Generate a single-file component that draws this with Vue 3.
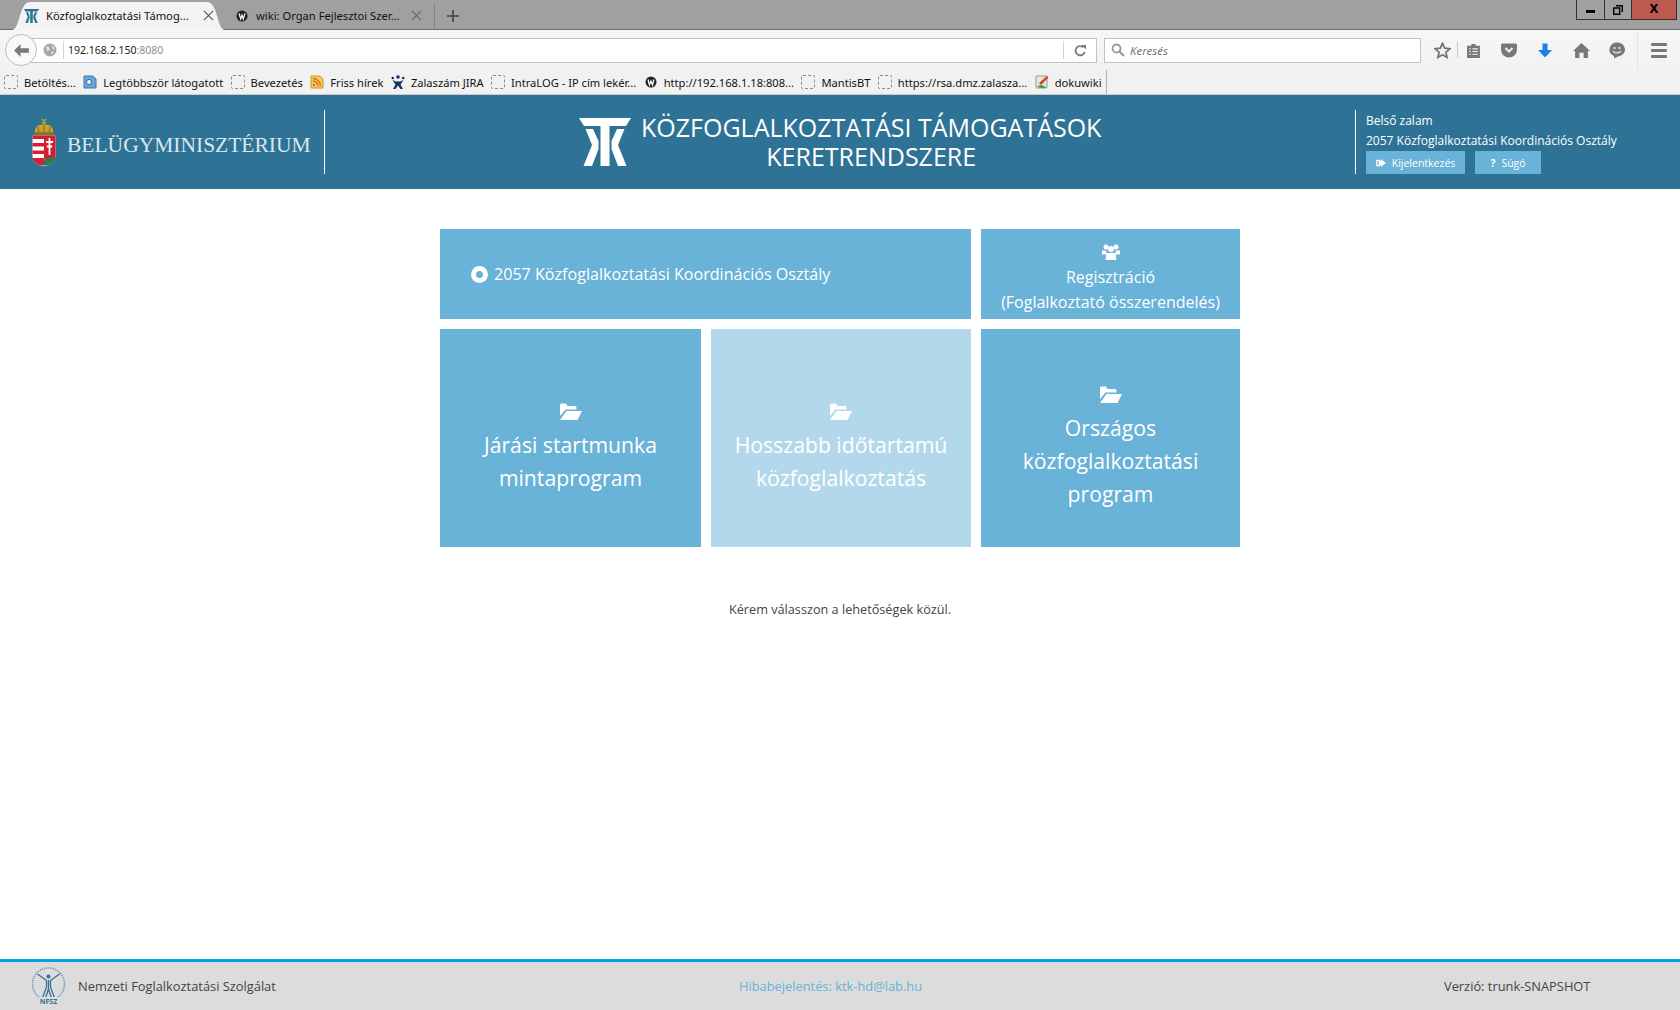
<script setup>
const bookmarks = [
  { label: 'Betöltés...', icon: 'empty' },
  { label: 'Legtöbbször látogatott', icon: 'most' },
  { label: 'Bevezetés', icon: 'empty' },
  { label: 'Friss hírek', icon: 'rss' },
  { label: 'Zalaszám JIRA', icon: 'jira' },
  { label: 'IntraLOG - IP cím lekér...', icon: 'empty' },
  { label: 'http://192.168.1.18:808...', icon: 'wiki' },
  { label: 'MantisBT', icon: 'empty' },
  { label: 'https://rsa.dmz.zalasza...', icon: 'empty' },
  { label: 'dokuwiki', icon: 'doku' }
]
const tiles = [
  { id: 1, lines: ['Járási startmunka', 'mintaprogram'], off: false },
  { id: 2, lines: ['Hosszabb időtartamú', 'közfoglalkoztatás'], off: true },
  { id: 3, lines: ['Országos', 'közfoglalkoztatási', 'program'], off: false }
]
const ktkPath = 'M0 0H52L47 8H5zM21.500 8h9v40h-9zM6.500 11H14L19.500 23V31L13 48H4.500L13 27zM45.500 11H38L32.500 23V31L39 48H47.500L39 27z'
</script>

<template>
  <div class="page">
    <div class="tabstrip">
      <div class="tab tab-active">
        <svg class="tab-bg" viewBox="0 0 213 28" preserveAspectRatio="none"><path d="M0 28C8 28 7 0 18 0H195C206 0 205 28 213 28Z" fill="#f3f3f3"/></svg>
        <svg class="favicon" viewBox="0 0 52 48"><path fill="#2e7396" :d="ktkPath"/></svg>
        <span class="tab-title">Közfoglalkoztatási Támog...</span>
        <svg class="tab-x" viewBox="0 0 12 12"><path d="M1 1l10 10M11 1L1 11" stroke="#555" stroke-width="1.200"/></svg>
      </div>
      <div class="tab tab-other">
        <svg class="favicon small" viewBox="0 0 14 14"><circle cx="7" cy="7" r="6.500" fill="#222"/><path d="M3.500 4l2 6.500L7 6l1.500 4.500 2-6.500" stroke="#fff" stroke-width="1.400" fill="none"/></svg>
        <span class="tab-title">wiki: Organ Fejlesztoi Szer...</span>
        <svg class="tab-x" viewBox="0 0 12 12"><path d="M1 1l10 10M11 1L1 11" stroke="#666" stroke-width="1.200"/></svg>
      </div>
      <span class="tab-sep"></span>
      <svg class="tab-plus" viewBox="0 0 12 12"><path d="M6 0v12M0 6h12" stroke="#444" stroke-width="1.600"/></svg>
      <div class="window-btns">
        <span class="wbtn"><span class="min-bar"></span></span>
        <span class="wbtn restore"><svg viewBox="0 0 10 10" width="10" height="10"><path d="M3 .7h6.300V7M.7 3h6v6.300h-6z" fill="none" stroke="#000" stroke-width="1.400"/></svg></span>
        <span class="wbtn close">x</span>
      </div>
    </div>

    <div class="navbar">
      <div class="back">
        <svg viewBox="0 0 16 14" width="15" height="13"><path d="M7 0L0 7l7 7V9.500h9v-5H7z" fill="#7a7a7a"/></svg>
      </div>
      <div class="urlbar">
        <svg class="globe" viewBox="0 0 14 14"><circle cx="7" cy="7" r="6.500" fill="#a8a8a8"/><path d="M3 3l3 1 1 3-3 1zM9 2l3 3-2 2zM8 9l3-1-2 4z" fill="#e4e4e4"/></svg>
        <span class="url-sep"></span>
        <span class="url">192.168.2.150<span class="port">:8080</span></span>
        <span class="url-sep end"></span>
        <svg class="reload" viewBox="0 0 14 14"><path d="M11.500 8.500A5 5 0 1 1 10 3.500" fill="none" stroke="#7a7a7a" stroke-width="2"/><path d="M8 1h5v5z" fill="#7a7a7a"/></svg>
      </div>
      <div class="searchbar">
        <svg viewBox="0 0 14 14" width="14" height="14"><circle cx="5.500" cy="5.500" r="4" fill="none" stroke="#999" stroke-width="1.800"/><path d="M8.500 8.500l4.500 4.500" stroke="#999" stroke-width="2.200"/></svg>
        <span>Keresés</span>
      </div>
      <div class="tools">
        <svg class="t-star" viewBox="0 0 16 16"><path d="M8 1.200l2 4.600 5 .5-3.800 3.300 1.100 4.900L8 12l-4.300 2.500 1.100-4.900L1 6.300l5-.5z" fill="#f3f3f3" stroke="#6f7274" stroke-width="1.600"/></svg>
        <span class="tool-sep"></span>
        <svg class="t-list" viewBox="0 0 14 14"><path d="M1 2.500h4V1h4v1.500h4V14H1z" fill="#75787a"/><path d="M3 5.500h1.500M6 5.500h5M3 8h1.500M6 8h5M3 10.500h1.500M6 10.500h5" stroke="#f0f0f0"/></svg>
        <svg class="t-pocket" viewBox="0 0 16 14"><path d="M0 1.500A1.500 1.500 0 0 1 1.500 0h13A1.500 1.500 0 0 1 16 1.500V6A8 8 0 0 1 0 6z" fill="#75787a"/><path d="M4.500 4.500L8 8l3.500-3.500" fill="none" stroke="#f0f0f0" stroke-width="2"/></svg>
        <svg class="t-down" viewBox="0 0 14 14"><path d="M4.500 0h5v6.500H14L7 14 0 6.500h4.500z" fill="#1b7fe4"/></svg>
        <svg class="t-home" viewBox="0 0 16 14"><path d="M8 0l8 7.500h-2V14h-4V9H6v5H2V7.500H0z" fill="#75787a"/></svg>
        <svg class="t-chat" viewBox="0 0 16 16"><path d="M8 0a7.500 7 0 0 1 1 14l-4 2v-2.600A7.500 7 0 0 1 8 0z" fill="#75787a"/><circle cx="5.500" cy="5.500" r="1.100" fill="#f0f0f0"/><circle cx="10.500" cy="5.500" r="1.100" fill="#f0f0f0"/><path d="M4 8.500c1.500 2.500 6.500 2.500 8 0" stroke="#f0f0f0" stroke-width="1.300" fill="none"/></svg>
        <span class="tool-sep tall"></span>
        <div class="hamburger"><i></i><i></i><i></i></div>
      </div>
    </div>

    <div class="bookmarks">
      <div v-for="b in bookmarks" :key="b.label" class="bm">
        <span v-if="b.icon === 'empty'" class="bm-empty"></span>
        <svg v-else-if="b.icon === 'most'" class="bm-ico" viewBox="0 0 14 14"><path d="M1 1h9l3 3v9H1z" fill="#6aa5d8" stroke="#3c78b0"/><circle cx="6" cy="7" r="2.500" fill="#fff" stroke="#2a5f90"/></svg>
        <svg v-else-if="b.icon === 'rss'" class="bm-ico" viewBox="0 0 14 14"><path d="M1 1h9l3 3v9H1z" fill="#f4c95e" stroke="#c79a2d"/><path d="M3 6a5 5 0 0 1 5 5M3 3.500A7.500 7.500 0 0 1 10.500 11" fill="none" stroke="#d9751a" stroke-width="1.300"/><circle cx="4" cy="10" r="1.200" fill="#d9751a"/></svg>
        <svg v-else-if="b.icon === 'jira'" class="bm-ico" viewBox="0 0 14 14"><circle cx="7" cy="2" r="1.800" fill="#17325f"/><circle cx="1.800" cy="3" r="1.300" fill="#17325f"/><circle cx="12.200" cy="3" r="1.300" fill="#17325f"/><path d="M1.500 5l3.500 1.500h4L12.500 5l-3 4.500L12 14H9.500L7 10.500 4.500 14H2l2.500-4.500z" fill="#17325f"/></svg>
        <svg v-else-if="b.icon === 'wiki'" class="bm-ico" viewBox="0 0 14 14"><circle cx="7" cy="7" r="5.500" fill="#222"/><path d="M4 4.500l1.500 5.500L7 6l1.500 4L10 4.500" stroke="#fff" stroke-width="1.300" fill="none"/></svg>
        <svg v-else class="bm-ico" viewBox="0 0 14 14"><rect x="1" y="1" width="11" height="12" rx="1" fill="#e8e6d8" stroke="#9a9a88"/><path d="M2 11l5-1 5 3H5z" fill="#3aa34a"/><path d="M4 8l8-7 1.500 1.500L6 10z" fill="#c9452f"/></svg>
        <span class="bm-label">{{ b.label }}</span>
      </div>
      <span class="bm-end"></span>
    </div>

    <header class="topbar">
      <div class="ministry">
        <svg class="arms" viewBox="0 0 24 48">
          <path d="M3 15C2 9 6 6.500 12 6.500S22 9 21 15z" fill="#c9a227"/>
          <path d="M10 1l4 4M14 1l-4 4M12 3v4" stroke="#c9a227" stroke-width="1.300"/>
          <path d="M6 9l1 6M12 7v8M18 9l-1 6" stroke="#7a6a1f"/>
          <rect x="2" y="14" width="20" height="2.500" fill="#8f7a22"/>
          <path d="M.5 17.500h23V38a11.500 10 0 0 1-23 0z" fill="#fff"/>
          <path d="M.5 17.500H12v3.500H.5zM.5 25H12v3.500H.5zM.5 32.500H12V36H.5zM.5 40H12v7.500C6 47.500 1.500 44 .5 40z" fill="#d3202f"/>
          <path d="M12 17.500h11.500V38c0 1.500-.2 2.500-.5 3.500H12z" fill="#d3202f"/>
          <path d="M17.500 20v17M14 24h7M14.800 28.500h5.400" stroke="#fff" stroke-width="1.800"/>
          <path d="M12 47.500V42c3-2.500 8-3.500 11.500-2 -.5 4-5 7.500-11.500 7.500z" fill="#2f7a53"/>
        </svg>
        <span class="ministry-name">BELÜGYMINISZTÉRIUM</span>
      </div>
      <span class="rule"></span>
      <div class="app-title">
        <svg class="ktk" viewBox="0 0 52 48"><path fill="#fff" :d="ktkPath"/></svg>
        <h1>KÖZFOGLALKOZTATÁSI TÁMOGATÁSOK<br>KERETRENDSZERE</h1>
      </div>
      <span class="rule"></span>
      <div class="user">
        <div class="user-line">Belső zalam</div>
        <div class="user-line">2057 Közfoglalkoztatási Koordinációs Osztály</div>
        <div class="user-btns">
          <button class="hbtn logout">
            <svg viewBox="0 0 12 10" width="10" height="8"><path d="M0 1h5v1.500H1.500v5H5V9H0zM6 2.500V0l6 5-6 5V7.500H3v-5z" fill="#fff"/></svg>
            Kijelentkezés
          </button>
          <button class="hbtn help"><b>?</b> Súgó</button>
        </div>
      </div>
    </header>

    <main class="content">
      <div class="grid">
        <div class="tile org">
          <span class="radio"></span>
          <span>2057 Közfoglalkoztatási Koordinációs Osztály</span>
        </div>
        <div class="tile reg">
          <svg class="people" viewBox="0 0 18 16"><circle cx="4" cy="3" r="2.500" fill="#fff"/><circle cx="14" cy="3" r="2.500" fill="#fff"/><circle cx="9" cy="5" r="3" fill="#fff"/><path d="M0 6.500h4l1 4H0zM18 6.500h-4l-1 4h5z" fill="#fff"/><path d="M4.500 9h9l1 7h-11z" fill="#fff"/></svg>
          <div>Regisztráció</div>
          <div>(Foglalkoztató összerendelés)</div>
        </div>
        <div class="tiles-row">
          <div v-for="t in tiles" :key="t.id" class="tile big" :class="{ off: t.off }">
            <svg class="folder" viewBox="0 0 22 17"><path d="M0 2a1.500 1.500 0 0 1 1.500-1.500h4.500L7.500 3H15a1.500 1.500 0 0 1 1.500 1.500V6.500H5.500L0 13z" fill="#fff"/><path d="M6.500 8H22l-4.500 9H0z" fill="#fff"/></svg>
            <div v-for="line in t.lines" :key="line">{{ line }}</div>
          </div>
        </div>
      </div>
      <p class="hint">Kérem válasszon a lehetőségek közül.</p>
    </main>

    <footer class="footer">
      <div class="nfsz">
        <svg class="nfsz-logo" viewBox="2 0 36 38">
          <circle cx="20" cy="17" r="16" fill="none" stroke="#6a9bb0" stroke-width="1.600" stroke-dasharray="1.200 1"/>
          <circle cx="20" cy="9.500" r="2" fill="#2e7396"/>
          <path d="M9 7l9 6.500V20l-4 11M31 7l-9 6.500V20l4 11M20 13v9l-3 9M20 22l3 9" fill="none" stroke="#2e7396" stroke-width="1.300"/>
          <rect x="10" y="30" width="20" height="8" fill="#dcdcdc"/>
          <text x="20" y="36.500" text-anchor="middle" class="nfsz-text">NFSZ</text>
        </svg>
        <span>Nemzeti Foglalkoztatási Szolgálat</span>
      </div>
      <a class="report">Hibabejelentés: ktk-hd@lab.hu</a>
      <span class="version">Verzió: trunk-SNAPSHOT</span>
    </footer>
  </div>
</template>

<style>
html, body { margin: 0; background: #fff; }
</style>

<style scoped>
.page {
  width: 1680px;
  height: 1010px;
  display: flex;
  flex-direction: column;
  font-family: "Open Sans", "Noto Sans", sans-serif;
  overflow: hidden;
}
.tabstrip {
  height: 30px;
  background: #a0a0a0;
  border-bottom: 1px solid #6e6e72;
  box-sizing: border-box;
  display: flex;
  align-items: center;
  padding-left: 12px;
  font-family: "Noto Sans", sans-serif;
  font-size: 11.200px;
  color: #111;
  flex: none;
}
.tab {
  height: 28px;
  box-sizing: border-box;
  display: flex;
  align-items: center;
  flex: none;
  position: relative;
  margin-top: 2px;
}
.tab-active { width: 213px; padding-left: 12px; }
.tab-bg { position: absolute; left: 0; top: 0; width: 213px; height: 28px; }
.tab-other { width: 209px; padding-left: 11px; }
.favicon { width: 15px; height: 14px; flex: none; position: relative; margin-right: 7px; }
.favicon.small { width: 12px; height: 12px; margin-right: 8px; }
.tab-title { width: 145px; flex: none; white-space: nowrap; position: relative; }
.tab-other .tab-title { width: 143px; }
.tab-x { width: 11px; height: 11px; flex: none; position: relative; margin-left: 12px; }
.tab-sep { width: 1px; height: 26px; background: #828282; margin-top: 2px; flex: none; }
.tab-plus { width: 12px; height: 12px; margin: 3px 0 0 12px; flex: none; }
.window-btns {
  margin-left: auto;
  margin-right: 3px;
  align-self: flex-start;
  display: flex;
  height: 20px;
  border: 1px solid #333;
  border-top: none;
  box-sizing: border-box;
}
.wbtn {
  width: 28px;
  display: flex;
  align-items: center;
  justify-content: center;
  border-right: 1px solid #333;
  box-sizing: border-box;
}
.min-bar { width: 9px; height: 3px; background: #000; margin-top: 3px; }
.restore { width: 27px; }
.close {
  width: 44px;
  background: #bc5a50;
  border-right: none;
  font: bold 16px "Liberation Sans", sans-serif;
  color: #000;
  padding-bottom: 3px;
}
.navbar {
  height: 40px;
  flex: none;
  background: linear-gradient(#f6f6f6, #f2f2f2);
  display: flex;
  align-items: center;
  padding-left: 5px;
  box-sizing: border-box;
}
.back {
  width: 32px;
  height: 32px;
  box-sizing: border-box;
  border: 1px solid #b9bec4;
  border-radius: 50%;
  background: #f9f9f9;
  display: flex;
  align-items: center;
  justify-content: center;
  flex: none;
  z-index: 1;
  margin-right: -8px;
}
.urlbar {
  width: 1068px;
  height: 25px;
  box-sizing: border-box;
  border: 1px solid #bcc3cb;
  background: #fff;
  display: flex;
  align-items: center;
  padding-left: 13px;
  font-family: "Noto Sans", sans-serif;
  font-size: 10.500px;
  color: #222;
  flex: none;
}
.globe { width: 14px; height: 14px; flex: none; }
.url-sep { width: 1px; height: 18px; background: #d3d3d3; margin: 0 4px 0 6px; flex: none; }
.url-sep.end { margin: 0 0 0 auto; }
.port { color: #8e8e8e; }
.reload { width: 13px; height: 13px; margin: 0 9px 0 10px; flex: none; }
.searchbar {
  width: 317px;
  height: 25px;
  margin-left: 7px;
  box-sizing: border-box;
  border: 1px solid #bcc3cb;
  background: #fff;
  display: flex;
  align-items: center;
  gap: 5px;
  padding-left: 6px;
  font: italic 11.500px "Noto Sans", sans-serif;
  color: #777;
  flex: none;
}
.tools { display: flex; align-items: center; margin-left: 13px; flex: 1; height: 100%; }
.t-star { width: 17px; height: 17px; flex: none; }
.tool-sep { width: 1px; height: 16px; background: #c8c8c8; margin: 0 8px 0 6px; flex: none; }
.tool-sep.tall { height: 37px; margin: 0 13px 0 12px; background: #e2e2e2; }
.t-list { width: 15px; height: 15px; flex: none; margin-right: 20px; }
.t-pocket { width: 16px; height: 15px; flex: none; margin-right: 21px; }
.t-down { width: 14px; height: 15px; flex: none; margin-right: 21px; }
.t-home { width: 17px; height: 15px; flex: none; margin-right: 19px; }
.t-chat { width: 16px; height: 17px; flex: none; }
.hamburger { display: flex; flex-direction: column; gap: 3px; width: 16px; }
.hamburger i { display: block; height: 3px; background: #75787a; border-radius: 1px; }
.bookmarks {
  height: 25px;
  flex: none;
  background: #f1f1f1;
  border-bottom: 1px solid #c9c9c9;
  box-sizing: border-box;
  display: flex;
  align-items: center;
  padding-left: 4px;
  gap: 7.400px;
  font-family: "Noto Sans", sans-serif;
  font-size: 11.150px;
  color: #111;
}
.bm { display: flex; align-items: center; gap: 6px; white-space: nowrap; }
.bm-empty { width: 12px; height: 12px; border: 1px dashed #8a8a8a; border-radius: 2px; flex: none; }
.bm-ico { width: 14px; height: 14px; flex: none; }
.bm-end { width: 1px; height: 24px; background: #b3b3b3; margin-left: -3px; }
.topbar {
  height: 94px;
  background: #2e7396;
  display: flex;
  align-items: center;
  color: #fff;
  flex: none;
}
.ministry { display: flex; align-items: center; width: 324px; padding-left: 32px; box-sizing: border-box; gap: 11px; }
.arms { width: 24px; height: 48px; flex: none; }
.ministry-name {
  font-family: "Liberation Serif", serif;
  font-size: 21.500px;
  color: #d9e6ec;
  white-space: nowrap;
  margin-top: 7px;
}
.rule { width: 1px; height: 64px; background: #fff; flex: none; }
.app-title { flex: 1; display: flex; align-items: center; padding-left: 254px; gap: 10px; }
.ktk { width: 52px; height: 48px; flex: none; }
.app-title h1 {
  margin: 0;
  font-size: 25px;
  font-weight: 400;
  line-height: 29px;
  text-align: center;
  white-space: nowrap;
}
.user { width: 324px; box-sizing: border-box; padding-left: 10px; font-size: 12px; }
.user-line { line-height: 20px; white-space: nowrap; }
.user-line:first-child { padding-top: 1px; }
.user-btns { display: flex; gap: 10px; }
.hbtn {
  height: 23px;
  border: none;
  padding: 0;
  background: #69b2d8;
  color: #fff;
  font: 10.500px "Open Sans", sans-serif;
  display: flex;
  align-items: center;
  justify-content: center;
  gap: 6px;
}
.logout { width: 99px; }
.help { width: 66px; }
.content { flex: 1; display: flex; flex-direction: column; align-items: center; padding-top: 40px; }
.grid { width: 800px; display: grid; grid-template-columns: 531px 259px; gap: 10px; }
.tile { background: #69b2d8; color: #fff; box-sizing: border-box; }
.org {
  height: 90px;
  display: flex;
  align-items: center;
  gap: 6px;
  padding-left: 31px;
  font-size: 16.100px;
}
.radio { width: 7px; height: 7px; background: #69b2d8; border: 5px solid #fff; border-radius: 50%; flex: none; }
.reg {
  height: 90px;
  font-size: 16px;
  line-height: 25px;
  text-align: center;
  padding-top: 15px;
}
.people { display: block; width: 18px; height: 16px; margin: 0 auto 5px; }
.tiles-row { grid-column: 1 / 3; display: grid; grid-template-columns: 261px 260px 259px; gap: 10px; }
.big {
  height: 218px;
  font-size: 21.200px;
  line-height: 33px;
  text-align: center;
  display: flex;
  flex-direction: column;
  align-items: center;
  justify-content: center;
  padding-top: 20px;
}
.big.off { background: #b4d8eb; }
.folder { width: 22px; height: 17px; margin-bottom: 8px; }
.hint { margin: 53px 0 0; font-size: 12.700px; line-height: 18px; color: #444; }
.footer {
  height: 51px;
  flex: none;
  background: #dcdcdc;
  border-top: 3px solid #00a2e0;
  box-sizing: border-box;
  display: flex;
  align-items: center;
  padding-left: 30px;
  font-size: 12.850px;
  color: #444;
}
.nfsz { display: flex; align-items: center; gap: 11px; width: 709px; }
.nfsz-logo { width: 37px; height: 38px; flex: none; }
.nfsz-text { font: bold 7px "Open Sans", sans-serif; fill: #2e7396; }
.report { color: #69b2d8; width: 705px; }
.version { white-space: nowrap; }
</style>
